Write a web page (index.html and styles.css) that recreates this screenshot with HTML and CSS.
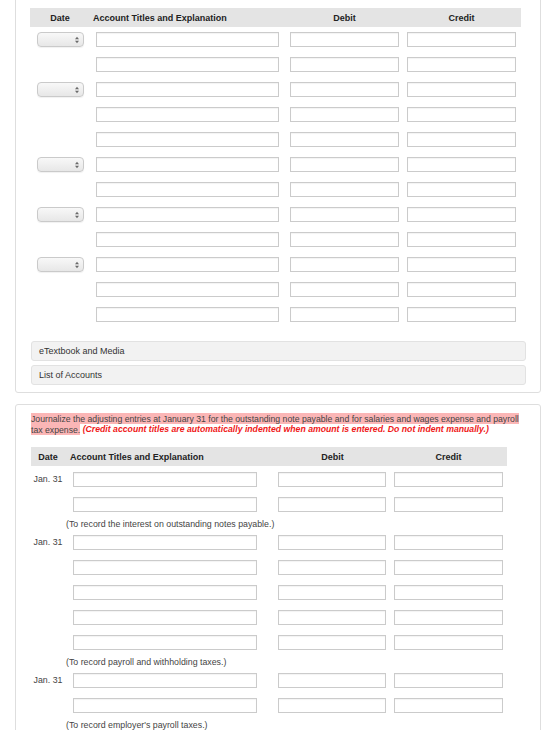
FILE: index.html
```html
<!DOCTYPE html>
<html lang="en">
<head>
<meta charset="utf-8">
<title>Journal entries</title>
<link rel="stylesheet" href="styles.css">
</head>
<body>

<section class="panel panel-top">
  <div class="journal journal-a">
    <div class="jrow jhead">
      <span class="c-date">Date</span>
      <span class="c-acct">Account Titles and Explanation</span>
      <span class="c-amt"><span class="lbl">Debit</span></span>
      <span class="c-amt"><span class="lbl">Credit</span></span>
    </div>

    <div class="jrow">
      <span class="c-date"><span class="picker"><svg viewBox="0 0 5 9" width="4" height="8"><polygon points="0,3.5 2.5,0.5 5,3.5"/><polygon points="0,5.5 2.5,8.5 5,5.5"/></svg></span></span>
      <span class="c-acct"><input type="text"></span>
      <span class="c-amt"><input type="text"></span>
      <span class="c-amt"><input type="text"></span>
    </div>
    <div class="jrow">
      <span class="c-date"></span>
      <span class="c-acct"><input type="text"></span>
      <span class="c-amt"><input type="text"></span>
      <span class="c-amt"><input type="text"></span>
    </div>
    <div class="jrow">
      <span class="c-date"><span class="picker"><svg viewBox="0 0 5 9" width="4" height="8"><polygon points="0,3.5 2.5,0.5 5,3.5"/><polygon points="0,5.5 2.5,8.5 5,5.5"/></svg></span></span>
      <span class="c-acct"><input type="text"></span>
      <span class="c-amt"><input type="text"></span>
      <span class="c-amt"><input type="text"></span>
    </div>
    <div class="jrow">
      <span class="c-date"></span>
      <span class="c-acct"><input type="text"></span>
      <span class="c-amt"><input type="text"></span>
      <span class="c-amt"><input type="text"></span>
    </div>
    <div class="jrow">
      <span class="c-date"></span>
      <span class="c-acct"><input type="text"></span>
      <span class="c-amt"><input type="text"></span>
      <span class="c-amt"><input type="text"></span>
    </div>
    <div class="jrow">
      <span class="c-date"><span class="picker"><svg viewBox="0 0 5 9" width="4" height="8"><polygon points="0,3.5 2.5,0.5 5,3.5"/><polygon points="0,5.5 2.5,8.5 5,5.5"/></svg></span></span>
      <span class="c-acct"><input type="text"></span>
      <span class="c-amt"><input type="text"></span>
      <span class="c-amt"><input type="text"></span>
    </div>
    <div class="jrow">
      <span class="c-date"></span>
      <span class="c-acct"><input type="text"></span>
      <span class="c-amt"><input type="text"></span>
      <span class="c-amt"><input type="text"></span>
    </div>
    <div class="jrow">
      <span class="c-date"><span class="picker"><svg viewBox="0 0 5 9" width="4" height="8"><polygon points="0,3.5 2.5,0.5 5,3.5"/><polygon points="0,5.5 2.5,8.5 5,5.5"/></svg></span></span>
      <span class="c-acct"><input type="text"></span>
      <span class="c-amt"><input type="text"></span>
      <span class="c-amt"><input type="text"></span>
    </div>
    <div class="jrow">
      <span class="c-date"></span>
      <span class="c-acct"><input type="text"></span>
      <span class="c-amt"><input type="text"></span>
      <span class="c-amt"><input type="text"></span>
    </div>
    <div class="jrow">
      <span class="c-date"><span class="picker"><svg viewBox="0 0 5 9" width="4" height="8"><polygon points="0,3.5 2.5,0.5 5,3.5"/><polygon points="0,5.5 2.5,8.5 5,5.5"/></svg></span></span>
      <span class="c-acct"><input type="text"></span>
      <span class="c-amt"><input type="text"></span>
      <span class="c-amt"><input type="text"></span>
    </div>
    <div class="jrow">
      <span class="c-date"></span>
      <span class="c-acct"><input type="text"></span>
      <span class="c-amt"><input type="text"></span>
      <span class="c-amt"><input type="text"></span>
    </div>
    <div class="jrow">
      <span class="c-date"></span>
      <span class="c-acct"><input type="text"></span>
      <span class="c-amt"><input type="text"></span>
      <span class="c-amt"><input type="text"></span>
    </div>
  </div>

  <div class="drawer drawer-first">eTextbook and Media</div>
  <div class="drawer">List of Accounts</div>
</section>

<section class="panel panel-bottom">
  <p class="prompt"><span class="mark">Journalize the adjusting entries at January 31 for the outstanding note payable and for salaries and wages expense and payroll tax expense.</span> <em class="warn">(Credit account titles are automatically indented when amount is entered. Do not indent manually.)</em></p>

  <div class="journal journal-b">
    <div class="jrow jhead">
      <span class="c-date">Date</span>
      <span class="c-acct">Account Titles and Explanation</span>
      <span class="c-amt"><span class="lbl">Debit</span></span>
      <span class="c-amt"><span class="lbl">Credit</span></span>
    </div>

    <div class="jrow">
      <span class="c-date">Jan. 31</span>
      <span class="c-acct"><input type="text"></span>
      <span class="c-amt"><input type="text"></span>
      <span class="c-amt"><input type="text"></span>
    </div>
    <div class="jrow">
      <span class="c-date"></span>
      <span class="c-acct"><input type="text"></span>
      <span class="c-amt"><input type="text"></span>
      <span class="c-amt"><input type="text"></span>
    </div>
    <div class="note">(To record the interest on outstanding notes payable.)</div>

    <div class="jrow">
      <span class="c-date">Jan. 31</span>
      <span class="c-acct"><input type="text"></span>
      <span class="c-amt"><input type="text"></span>
      <span class="c-amt"><input type="text"></span>
    </div>
    <div class="jrow">
      <span class="c-date"></span>
      <span class="c-acct"><input type="text"></span>
      <span class="c-amt"><input type="text"></span>
      <span class="c-amt"><input type="text"></span>
    </div>
    <div class="jrow">
      <span class="c-date"></span>
      <span class="c-acct"><input type="text"></span>
      <span class="c-amt"><input type="text"></span>
      <span class="c-amt"><input type="text"></span>
    </div>
    <div class="jrow">
      <span class="c-date"></span>
      <span class="c-acct"><input type="text"></span>
      <span class="c-amt"><input type="text"></span>
      <span class="c-amt"><input type="text"></span>
    </div>
    <div class="jrow">
      <span class="c-date"></span>
      <span class="c-acct"><input type="text"></span>
      <span class="c-amt"><input type="text"></span>
      <span class="c-amt"><input type="text"></span>
    </div>
    <div class="note">(To record payroll and withholding taxes.)</div>

    <div class="jrow">
      <span class="c-date">Jan. 31</span>
      <span class="c-acct"><input type="text"></span>
      <span class="c-amt"><input type="text"></span>
      <span class="c-amt"><input type="text"></span>
    </div>
    <div class="jrow">
      <span class="c-date"></span>
      <span class="c-acct"><input type="text"></span>
      <span class="c-amt"><input type="text"></span>
      <span class="c-amt"><input type="text"></span>
    </div>
    <div class="note">(To record employer's payroll taxes.)</div>
  </div>
</section>

</body>
</html>
```

FILE: styles.css
```css
html, body {
  margin: 0;
  padding: 0;
  background: #ffffff;
}

body {
  font-family: "Liberation Sans", Arial, Helvetica, sans-serif;
  font-size: 8.8px;
  color: #333333;
}

/* Question panels */
.panel {
  box-sizing: border-box;
  width: 526px;
  margin-left: 15px;
  background: #ffffff;
  border: 1px solid #dedede;
  border-radius: 3px;
}

.panel-top {
  margin-top: -10px;
  padding: 17px 14px 7px 14px;
}

.panel-bottom {
  margin-top: 11px;
  padding: 8px 14px 40px 15px;
}

/* Journal grid */
.journal {
  width: max-content;
}

.journal .jrow {
  display: grid;
  align-items: start;
  height: 25px;
}

.journal-a .jrow {
  grid-template-columns: 63px 197px 117px 114px;
}

.journal-b .jrow {
  grid-template-columns: 39px 208px 116px 113px;
}

.journal .jhead {
  height: 19px;
  align-items: center;
  background: #e4e4e4;
  font-weight: bold;
  font-size: 9px;
  color: #222222;
  margin-bottom: 5px;
}

.journal-b .jhead {
  margin-bottom: 6px;
}

.c-date {
  text-align: center;
}

.journal-a .c-date {
  padding-right: 3px;
}

.journal-b .c-date {
  padding-right: 5px;
}

.journal-b .jrow:not(.jhead) .c-date {
  line-height: 15px;
  color: #444444;
}

.c-amt .lbl {
  display: block;
  width: 109px;
  text-align: center;
}

input[type="text"] {
  display: block;
  box-sizing: border-box;
  height: 15px;
  margin: 0;
  padding: 0 3px;
  border: 1px solid #cbcbcb;
  border-radius: 0;
  background: #ffffff;
  box-shadow: inset 0 1px 1px rgba(0, 0, 0, 0.05);
  font: inherit;
}

.c-acct input {
  margin-left: 3px;
  width: 183px;
}

.journal-b .c-acct input {
  width: 184px;
}

.c-amt input {
  width: 109px;
}

.journal-b .c-amt:nth-child(3) input {
  width: 108px;
}

/* Date picker (closed select) */
.picker {
  box-sizing: border-box;
  display: flex;
  align-items: center;
  justify-content: flex-end;
  width: 47px;
  height: 15px;
  margin: 0 auto;
  padding-right: 4px;
  border: 1px solid #cacaca;
  border-radius: 4px;
  background: linear-gradient(#f8f8f8, #e7e7e7);
  box-shadow: 0 1px 1px rgba(0, 0, 0, 0.06);
}

.picker svg {
  display: block;
  fill: #6a6a6a;
}

/* Collapsible resource bars */
.drawer {
  box-sizing: border-box;
  height: 20px;
  margin: 4px 0 0 1px;
  padding-left: 7px;
  line-height: 18px;
  font-size: 9px;
  color: #333333;
  background: #f2f2f2;
  border: 1px solid #e2e2e2;
  border-radius: 3px;
}

.drawer-first {
  margin-top: 9px;
}

/* Instructions */
.prompt {
  margin: 0 0 12px;
  font-size: 8.7px;
  line-height: 11px;
  color: #444444;
}

.mark {
  background: #fbb6b6;
  padding: 0.5px 0;
}

.warn {
  font-weight: bold;
  font-style: italic;
  color: #f01818;
}

.note {
  height: 12px;
  line-height: 12px;
  margin: -4px 0 5px;
  padding-left: 35px;
  color: #444444;
}
```
